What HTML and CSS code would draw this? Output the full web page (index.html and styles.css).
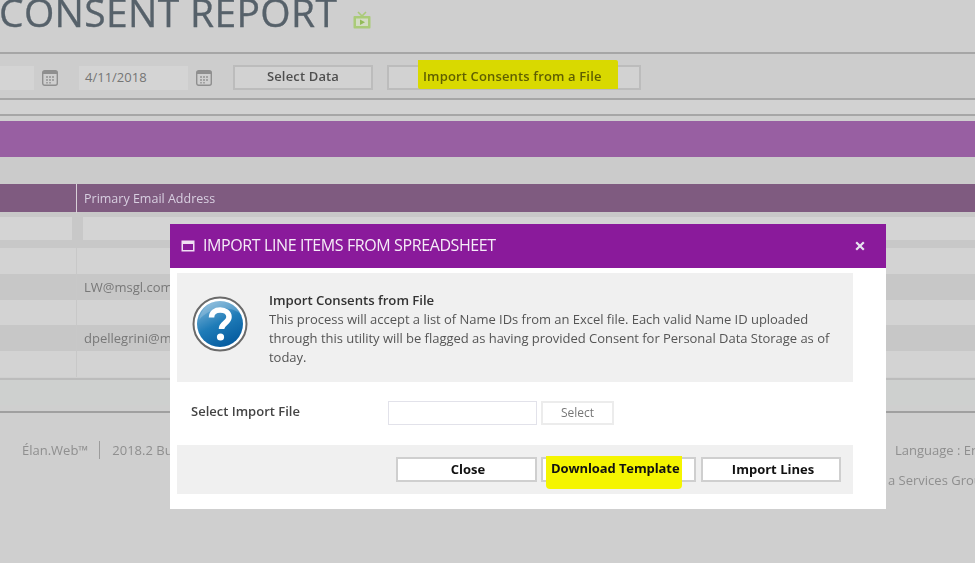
FILE: index.html
```html
<!DOCTYPE html>
<html lang="en">
<head>
  <meta charset="UTF-8" />
  <title>Consent Report</title>
  <link rel="stylesheet" href="styles.css">
</head>
<body>
  <div class="page">
    <div class="title-row">
      <h1>CONSENT REPORT</h1>
      <svg class="tv-icon" width="18" height="18" viewBox="0 0 18 18">
        <path d="M5 1l4 4 4-4" fill="none" stroke="#aacb78" stroke-width="1.6"/>
        <rect x="0.5" y="5" width="17" height="12.5" rx="1" fill="#aacb78"/>
        <rect x="3" y="7.5" width="12" height="7.5" fill="#d3dcc4"/>
        <path d="M7 8.5l5 2.8-5 2.8z" fill="#93bb58"/>
      </svg>
    </div>

    <div class="toolbar">
      <div class="date-input first"></div>
      <svg class="cal" viewBox="0 0 16 17"><use href="#cal-icon"/></svg>
      <div class="date-input">4/11/2018</div>
      <svg class="cal" viewBox="0 0 16 17"><use href="#cal-icon"/></svg>
      <div class="tool-btn select-data">Select Data</div>
      <div class="tool-btn import-btn"><span class="mark-dim">Import Consents from a File</span></div>
    </div>
    <div class="strip"></div>
    <div class="purple-band"></div>
    <div class="band-gap"></div>

    <div class="table-head">
      <div class="cell"></div>
      <div class="cell">Primary Email Address</div>
    </div>
    <div class="filter-row">
      <div class="filter-cell a"></div>
      <div class="filter-cell b"></div>
    </div>
    <div class="row"><div class="cell"></div><div class="cell"></div></div>
    <div class="row alt"><div class="cell"></div><div class="cell">LW@msgl.com</div></div>
    <div class="row"><div class="cell"></div><div class="cell"></div></div>
    <div class="row alt"><div class="cell"></div><div class="cell">dpellegrini@msgl.com</div></div>
    <div class="row"><div class="cell"></div><div class="cell"></div></div>
    <div class="table-foot"></div>

    <div class="footer">
      <div class="foot-line">
        <span class="brand">Élan.Web™</span>
        <span class="build">2018.2 Build</span>
        <span class="lang">Language : English</span>
      </div>
      <div class="foot-copy">a Services Group</div>
    </div>
  </div>

  <!-- popup -->
  <div class="modal">
    <div class="modal-head">
      <svg class="win-icon" width="14" height="12" viewBox="0 0 14 12">
        <rect x="0.5" y="0.5" width="13" height="11" fill="#f0dff3"/>
        <rect x="2" y="4" width="10" height="6" fill="#8a1a9b"/>
      </svg>
      <span class="modal-title">IMPORT LINE ITEMS FROM SPREADSHEET</span>
      <svg class="close-x" width="10" height="10" viewBox="0 0 10 10">
        <path d="M1.2 1.2l7.6 7.6M8.8 1.2l-7.6 7.6" stroke="#e8e4f0" stroke-width="2.2"/>
      </svg>
    </div>

    <div class="info-box">
      <svg class="help-icon" width="56" height="56" viewBox="0 0 56 56">
        <defs>
          <linearGradient id="blue" x1="0.2" y1="0" x2="0.7" y2="1">
            <stop offset="0" stop-color="#7fb5d8"/>
            <stop offset="0.5" stop-color="#1f7cb8"/>
            <stop offset="1" stop-color="#045a9e"/>
          </linearGradient>
        </defs>
        <circle cx="28" cy="28" r="26.5" fill="#fff" stroke="#6a6a6a" stroke-width="2"/>
        <circle cx="28" cy="28" r="23" fill="url(#blue)"/>
        <path d="M7 24C16 12 38 8 50 19 44 8 34 5 28 5 17 5 9 13 7 24z" fill="#fff" opacity="0.18"/>
        <path d="M19.5 21.5c0-5 4-7.5 8.700-7.500 5 0 8.800 2.800 8.800 7 0 6-7.500 6-7.500 12" fill="none" stroke="#fff" stroke-width="5.500"/>
        <circle cx="28.500" cy="41" r="3.600" fill="#fff"/>
      </svg>
      <div class="info-text">
        <strong>Import Consents from File</strong>
        <p>This process will accept a list of Name IDs from an Excel file. Each valid Name ID uploaded through this utility will be flagged as having provided Consent for Personal Data Storage as of today.</p>
      </div>
    </div>

    <div class="file-row">
      <label>Select Import File</label>
      <div class="file-input"></div>
      <div class="file-btn">Select</div>
    </div>

    <div class="modal-actions">
      <div class="act-btn close-btn">Close</div>
      <div class="act-btn template-btn"><span class="mark">Download Template</span></div>
      <div class="act-btn lines-btn">Import Lines</div>
    </div>
  </div>

  <svg width="0" height="0" class="defs">
    <symbol id="cal-icon" viewBox="0 0 16 17">
      <rect x="0.7" y="1.700" width="14.600" height="14.600" rx="2" fill="#cfcfcf" stroke="#8f8f8f" stroke-width="1.400"/>
      <rect x="1" y="2" width="14" height="3" fill="#8f8f8f"/>
      <path d="M4 7h2v2H4zM7 7h2v2H7zM10 7h2v2h-2zM4 10h2v2H4zM7 10h2v2H7zM10 10h2v2h-2zM4 13h2v1.500H4zM7 13h2v1.500H7z" fill="#a2a2a2"/>
    </symbol>
  </svg>
</body>
</html>
```

FILE: styles.css
```css
html, body {
  margin: 0;
  height: 563px;
  overflow: hidden;
}
body {
  position: relative;
  background: #cfcfcf;
  font-family: "Open Sans", "Noto Sans", sans-serif;
  font-size: 13px;
  color: #777;
}
.defs {
  position: absolute;
}
.page {
  width: 975px;
  filter: blur(0.35px);
}

.title-row {
  height: 52px;
  display: flex;
  align-items: flex-start;
}
h1 {
  margin: -12px 0 0 -1px;
  font-size: 39px;
  line-height: 48px;
  font-weight: 400;
  letter-spacing: 0.35px;
  color: #56616a;
  -webkit-text-stroke: 0.3px #56616a;
  white-space: nowrap;
}
.tv-icon {
  margin: 11px 0 0 16px;
}

.toolbar {
  height: 41px;
  border-top: 2px solid #a6a6a6;
  background: #cdcdcd;
  display: flex;
  align-items: center;
  padding-top: 3px;
}
.date-input {
  width: 109px;
  height: 24px;
  line-height: 23px;
  background: #d4d4d4;
  margin-left: 21px;
  padding-left: 6px;
  box-sizing: border-box;
  color: #757575;
}
.date-input.first {
  width: 34px;
  margin-left: 0;
}
.cal {
  width: 16px;
  height: 17px;
  margin-left: 8px;
}
.tool-btn {
  height: 25px;
  line-height: 19px;
  box-sizing: border-box;
  border: 2px solid #bcbcbc;
  background: #d2d2d2;
  font-weight: 600;
  font-size: 13px;
  letter-spacing: 0.15px;
  color: #4f4f4f;
}
.select-data {
  width: 140px;
  margin-left: 21px;
  text-align: center;
}
.import-btn {
  width: 254px;
  margin-left: 14px;
  padding-left: 29px;
}
.mark-dim {
  display: inline-block;
  height: 29px;
  line-height: 32px;
  margin-top: -7px;
  padding: 0 16px 0 5px;
  background: #d9d900;
  color: #5f5f00;
  border-radius: 0 2px 0 2px;
  vertical-align: top;
  white-space: nowrap;
}

.strip {
  height: 14px;
  border-top: 2px solid #a6a6a6;
  border-bottom: 2px solid #a6a6a6;
  background: #d2d2d2;
}
.purple-band {
  height: 36px;
  margin-top: 5px;
  background: #985fa2;
}
.band-gap {
  height: 27px;
  background: #cbcbcb;
}

.table-head,
.row {
  display: grid;
  grid-template-columns: 76px 1fr;
}
.table-head {
  height: 28px;
  line-height: 29px;
  background: #7f5b80;
  color: #d8cfe0;
  font-size: 12.500px;
}
.table-head .cell:last-child {
  border-left: 1px solid #d8d0d8;
}
.cell {
  padding-left: 7px;
  white-space: nowrap;
}
.filter-row {
  height: 36px;
  background: #c8c8c8;
  display: flex;
  padding-top: 5px;
  box-sizing: border-box;
}
.filter-cell {
  height: 23px;
  background: #d4d4d4;
}
.filter-cell.a {
  width: 72px;
}
.filter-cell.b {
  flex: 1;
  margin-left: 11px;
}
.row {
  height: 25.800px;
  line-height: 26px;
  background: #d3d3d3;
  color: #787878;
}
.row .cell:last-child {
  border-left: 1px solid #c8c8c8;
}
.row.alt {
  background: #c7c7c7;
}
.table-foot {
  height: 27px;
  margin-top: 1px;
  border-top: 2px solid #bcbcbc;
  background: #ced0cf;
  box-sizing: border-box;
}
.footer {
  border-top: 2px solid #a0a0a0;
  margin-top: 6px;
  color: #8f8f8f;
}
.foot-line {
  display: flex;
  align-items: center;
  height: 20px;
  margin-top: 27px;
  white-space: nowrap;
}
.brand {
  margin-left: 22px;
  padding-right: 11px;
  border-right: 1px solid #9c9c9c;
}
.build {
  margin-left: 12px;
}
.lang {
  position: absolute;
  left: 895px;
}
.foot-copy {
  margin: 11px 0 0 888px;
  white-space: nowrap;
}

/* popup */
.modal {
  position: absolute;
  left: 170px;
  top: 224px;
  width: 716px;
  height: 285px;
  background: #fff;
  color: #444;
  filter: blur(0.35px);
}
.modal-head {
  height: 44px;
  background: #8a1a9b;
  display: flex;
  align-items: center;
  color: #f5ecf7;
}
.win-icon {
  margin-left: 11px;
}
.modal-title {
  margin: -2px 0 0 8px;
  font-size: 16px;
  letter-spacing: -0.4px;
  white-space: nowrap;
}
.close-x {
  margin-left: auto;
  margin-right: 21px;
}
.info-box {
  width: 676px;
  height: 109px;
  margin: 5px 0 0 7px;
  background: #f0f0f0;
  display: flex;
}
.help-icon {
  margin: 23px 0 0 15px;
  flex: none;
}
.info-text {
  margin: 18px 0 0 21px;
  width: 568px;
  line-height: 19px;
  letter-spacing: -0.03px;
  color: #555;
}
.info-text strong {
  color: #333;
  font-weight: 600;
  font-size: 13.200px;
  display: block;
}
.info-text p {
  margin: 0;
}
.file-row {
  display: flex;
  align-items: center;
  height: 24px;
  margin-top: 19px;
  padding-left: 21px;
}
.file-row label {
  width: 197px;
  font-weight: 600;
  color: #444;
  margin-top: -4px;
}
.file-input {
  width: 149px;
  height: 24px;
  box-sizing: border-box;
  border: 1px solid #e2e2ea;
}
.file-btn {
  width: 73px;
  height: 24px;
  line-height: 20px;
  margin-left: 4px;
  box-sizing: border-box;
  border: 2px solid #ececec;
  text-align: center;
  font-size: 12px;
  color: #777;
}
.modal-actions {
  width: 676px;
  height: 49px;
  margin: 20px 0 0 7px;
  background: #f0f0f0;
  display: flex;
  align-items: center;
  padding-left: 219px;
  box-sizing: border-box;
  gap: 4px;
}
.act-btn {
  height: 25px;
  line-height: 21px;
  box-sizing: border-box;
  border: 2px solid #cfcfcf;
  background: #fff;
  text-align: center;
  font-weight: 700;
  font-size: 13px;
  color: #111;
  white-space: nowrap;
}
.close-btn {
  width: 141px;
  padding-left: 3px;
}
.template-btn {
  width: 155px;
  padding-left: 3px;
  text-align: left;
}
.lines-btn {
  width: 140px;
  margin-left: 1px;
  padding-left: 4px;
}
.mark {
  display: inline-block;
  height: 33px;
  line-height: 24px;
  margin-top: -3px;
  padding: 0 3px 0 5px;
  background: #f5f500;
  border-radius: 0 0 4px 4px;
  letter-spacing: -0.1px;
  vertical-align: top;
}
```
